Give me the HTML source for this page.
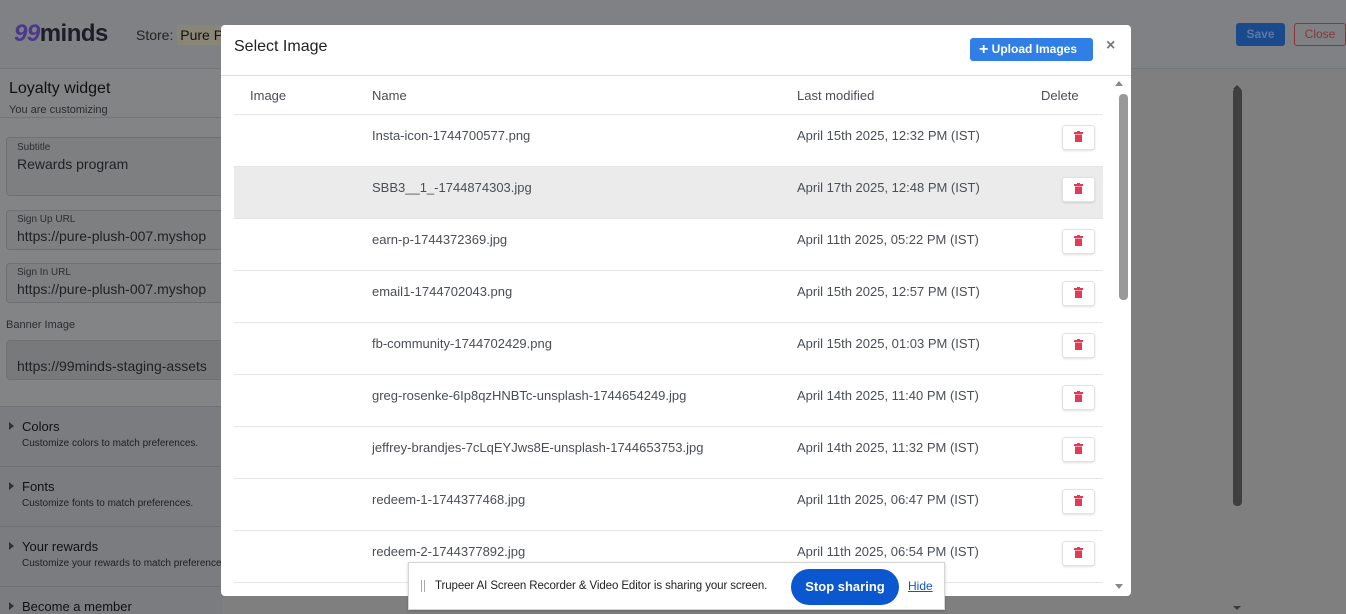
<!DOCTYPE html>
<html style="width:1346px;height:614px;overflow:hidden"><head><meta charset="utf-8"><style>
*{box-sizing:border-box;margin:0;padding:0}
body{width:1346px;height:614px;overflow:hidden;background:#7f7f7f;font-family:"Liberation Sans",sans-serif;position:relative}
.abs{position:absolute}
.hdr{left:0;top:0;width:1346px;height:69px;background:#808184;border-bottom:1px solid #747577}
.left{left:0;top:69px;width:222px;height:545px;background:#838486}
.fld{left:6px;width:230px;border:1px solid #6f7072;border-radius:4px;background:#7e7f81}
.lbl{font-size:10px;color:#2c2d30}
.val{font-size:14px;color:#1f2023}
.sec{left:0;width:222px;height:60px;background:#7a7c80;border-top:1px solid #707174}
.sec b{position:absolute;left:22px;top:12px;font-size:13px;font-weight:normal;color:#111}
.sec i{position:absolute;left:22px;top:31px;font-size:10px;font-style:normal;color:#1e1f22;white-space:nowrap}
.sec:before{content:"";position:absolute;left:9px;top:15px;border-left:5px solid #333;border-top:4px solid transparent;border-bottom:4px solid transparent}
.modal{left:221px;top:25px;width:910px;height:571px;background:#fff;border-radius:4px;overflow:hidden}
.row{position:absolute;left:13px;width:869px;height:52px;border-bottom:1px solid #e6e6e6;font-size:13px;color:#4a4f55}
.row .n{position:absolute;left:138px;top:13px}
.row .d{position:absolute;left:563px;top:13px}
.row .del{position:absolute;left:828px;top:10px;width:33px;height:25px;border:1px solid #e2e2e2;border-radius:3px;background:#fff;box-shadow:0 1px 2px rgba(0,0,0,.12)}
.tr{position:absolute;left:11px;top:5px;width:9px;height:11px}
</style></head><body>
<div class="abs hdr">
 <div class="abs" style="left:14px;top:20px;font-size:24px;font-weight:bold;color:#1d1d28;letter-spacing:-0.5px"><span style="color:#4b3a8c;font-style:italic">99</span>minds</div>
 <div class="abs" style="left:136px;top:27px;font-size:14px;color:#222">Store: <span style="background:#8a8676;padding:2px 3px;color:#111">Pure Pl</span></div>
 <div class="abs" style="left:1236px;top:23px;width:49px;height:23px;background:#1b4a8c;border-radius:3px;color:#5a79a8;font-size:12px;font-weight:bold;text-align:center;line-height:23px">Save</div>
 <div class="abs" style="left:1294px;top:23px;width:52px;height:23px;border:1px solid #8a3538;border-radius:3px;color:#8a3538;font-size:12px;text-align:center;line-height:21px">Close</div>
</div>
<div class="abs left"></div>
<div class="abs" style="left:9px;top:80px;font-size:16px;color:#111">Loyalty widget</div>
<div class="abs" style="left:9px;top:104px;font-size:11px;color:#2b2c30">You are customizing</div>
<div class="abs" style="left:0;top:117px;width:222px;border-top:1px solid #747577"></div>
<div class="abs fld" style="top:137px;height:59px"><div class="abs lbl" style="left:10px;top:4px">Subtitle</div><div class="abs val" style="left:10px;top:18px">Rewards program</div></div>
<div class="abs fld" style="top:210px;height:40px"><div class="abs lbl" style="left:10px;top:3px">Sign Up URL</div><div class="abs val" style="left:10px;top:17px;white-space:nowrap">https://pure-plush-007.myshop</div></div>
<div class="abs fld" style="top:263px;height:40px"><div class="abs lbl" style="left:10px;top:3px">Sign In URL</div><div class="abs val" style="left:10px;top:17px;white-space:nowrap">https://pure-plush-007.myshop</div></div>
<div class="abs lbl" style="left:6px;top:319px;font-size:11px">Banner Image</div>
<div class="abs fld" style="top:340px;height:40px;background:#78797b"><div class="abs val" style="left:10px;top:17px;white-space:nowrap">https://99minds-staging-assets</div></div>
<div class="abs sec" style="top:406px"><b>Colors</b><i>Customize colors to match preferences.</i></div>
<div class="abs sec" style="top:466px"><b>Fonts</b><i>Customize fonts to match preferences.</i></div>
<div class="abs sec" style="top:526px"><b>Your rewards</b><i>Customize your rewards to match preferences.</i></div>
<div class="abs sec" style="top:586px;height:28px"><b>Become a member</b></div>
<div class="abs" style="left:1233px;top:85px;border-bottom:4px solid #3a3a3a;border-left:4px solid transparent;border-right:4px solid transparent"></div>
<div class="abs" style="left:1233px;top:88px;width:9px;height:418px;background:#3f3f3f;border-radius:4px"></div>
<div class="abs" style="left:1233px;top:606px;border-top:4px solid #3a3a3a;border-left:4px solid transparent;border-right:4px solid transparent"></div>

<div class="abs modal">
 <div class="abs" style="left:13px;top:13px;font-size:16px;color:#222">Select Image</div>
 <div class="abs" style="left:749px;top:13px;width:123px;height:23px;background:#2f7fe6;border-radius:3px;color:#fff;font-size:12px;font-weight:bold;line-height:23px;padding-left:9px"><span style="font-size:16px;vertical-align:-1px">+</span> Upload Images</div>
 <div class="abs" style="left:885px;top:12px;font-size:16px;font-weight:bold;color:#777">×</div>
 <div class="abs" style="left:0;top:50px;width:910px;border-top:1px solid #dcdde6"></div>
 <div class="abs" style="left:13px;top:51px;width:869px;height:39px;border-bottom:1px solid #e6e6e6;font-size:13px;color:#4a4f55">
  <span class="abs" style="left:16px;top:12px">Image</span><span class="abs" style="left:138px;top:12px">Name</span><span class="abs" style="left:563px;top:12px">Last modified</span><span class="abs" style="left:807px;top:12px">Delete</span>
 </div>
 <div class="row" style="top:90px"><span class="n">Insta-icon-1744700577.png</span><span class="d">April 15th 2025, 12:32 PM (IST)</span><span class="del"><svg class="tr" viewBox="0 0 9 11"><rect x="0" y="1" width="9" height="2" fill="#e23a57"/><rect x="3" y="0" width="3" height="1" fill="#e23a57"/><rect x="1" y="3.5" width="7" height="7.5" fill="#e23a57"/></svg></span></div>
 <div class="row" style="top:142px;background:#ebebeb"><span class="n">SBB3__1_-1744874303.jpg</span><span class="d">April 17th 2025, 12:48 PM (IST)</span><span class="del"><svg class="tr" viewBox="0 0 9 11"><rect x="0" y="1" width="9" height="2" fill="#e23a57"/><rect x="3" y="0" width="3" height="1" fill="#e23a57"/><rect x="1" y="3.5" width="7" height="7.5" fill="#e23a57"/></svg></span></div>
 <div class="row" style="top:194px"><span class="n">earn-p-1744372369.jpg</span><span class="d">April 11th 2025, 05:22 PM (IST)</span><span class="del"><svg class="tr" viewBox="0 0 9 11"><rect x="0" y="1" width="9" height="2" fill="#e23a57"/><rect x="3" y="0" width="3" height="1" fill="#e23a57"/><rect x="1" y="3.5" width="7" height="7.5" fill="#e23a57"/></svg></span></div>
 <div class="row" style="top:246px"><span class="n">email1-1744702043.png</span><span class="d">April 15th 2025, 12:57 PM (IST)</span><span class="del"><svg class="tr" viewBox="0 0 9 11"><rect x="0" y="1" width="9" height="2" fill="#e23a57"/><rect x="3" y="0" width="3" height="1" fill="#e23a57"/><rect x="1" y="3.5" width="7" height="7.5" fill="#e23a57"/></svg></span></div>
 <div class="row" style="top:298px"><span class="n">fb-community-1744702429.png</span><span class="d">April 15th 2025, 01:03 PM (IST)</span><span class="del"><svg class="tr" viewBox="0 0 9 11"><rect x="0" y="1" width="9" height="2" fill="#e23a57"/><rect x="3" y="0" width="3" height="1" fill="#e23a57"/><rect x="1" y="3.5" width="7" height="7.5" fill="#e23a57"/></svg></span></div>
 <div class="row" style="top:350px"><span class="n">greg-rosenke-6Ip8qzHNBTc-unsplash-1744654249.jpg</span><span class="d">April 14th 2025, 11:40 PM (IST)</span><span class="del"><svg class="tr" viewBox="0 0 9 11"><rect x="0" y="1" width="9" height="2" fill="#e23a57"/><rect x="3" y="0" width="3" height="1" fill="#e23a57"/><rect x="1" y="3.5" width="7" height="7.5" fill="#e23a57"/></svg></span></div>
 <div class="row" style="top:402px"><span class="n">jeffrey-brandjes-7cLqEYJws8E-unsplash-1744653753.jpg</span><span class="d">April 14th 2025, 11:32 PM (IST)</span><span class="del"><svg class="tr" viewBox="0 0 9 11"><rect x="0" y="1" width="9" height="2" fill="#e23a57"/><rect x="3" y="0" width="3" height="1" fill="#e23a57"/><rect x="1" y="3.5" width="7" height="7.5" fill="#e23a57"/></svg></span></div>
 <div class="row" style="top:454px"><span class="n">redeem-1-1744377468.jpg</span><span class="d">April 11th 2025, 06:47 PM (IST)</span><span class="del"><svg class="tr" viewBox="0 0 9 11"><rect x="0" y="1" width="9" height="2" fill="#e23a57"/><rect x="3" y="0" width="3" height="1" fill="#e23a57"/><rect x="1" y="3.5" width="7" height="7.5" fill="#e23a57"/></svg></span></div>
 <div class="row" style="top:506px"><span class="n">redeem-2-1744377892.jpg</span><span class="d">April 11th 2025, 06:54 PM (IST)</span><span class="del"><svg class="tr" viewBox="0 0 9 11"><rect x="0" y="1" width="9" height="2" fill="#e23a57"/><rect x="3" y="0" width="3" height="1" fill="#e23a57"/><rect x="1" y="3.5" width="7" height="7.5" fill="#e23a57"/></svg></span></div>
 <div class="abs" style="left:894px;top:56px;border-bottom:5px solid #888;border-left:4px solid transparent;border-right:4px solid transparent"></div>
 <div class="abs" style="left:898px;top:69px;width:9px;height:206px;background:#999;border-radius:4px"></div>
 <div class="abs" style="left:894px;top:559px;border-top:5px solid #888;border-left:4px solid transparent;border-right:4px solid transparent"></div>
</div>

<div class="abs" style="left:408px;top:562px;width:537px;height:48px;background:#fff;border:1px solid #d5d5d5;box-shadow:0 1px 3px rgba(0,0,0,.2)">
 <div class="abs" style="left:12px;top:17px;width:4px;height:12px;border-left:1px solid #aaa;border-right:1px solid #aaa"></div>
 <div class="abs" style="left:26px;top:17px;font-size:11.5px;color:#222;white-space:nowrap;letter-spacing:-0.1px">Trupeer AI Screen Recorder &amp; Video Editor is sharing your screen.</div>
 <div class="abs" style="left:382px;top:6px;width:108px;height:36px;background:#0b57d0;border-radius:18px;color:#fff;font-size:13px;font-weight:bold;text-align:center;line-height:36px">Stop sharing</div>
 <div class="abs" style="left:499px;top:16px;font-size:12px;color:#0b57d0;text-decoration:underline">Hide</div>
</div>
</body></html>
